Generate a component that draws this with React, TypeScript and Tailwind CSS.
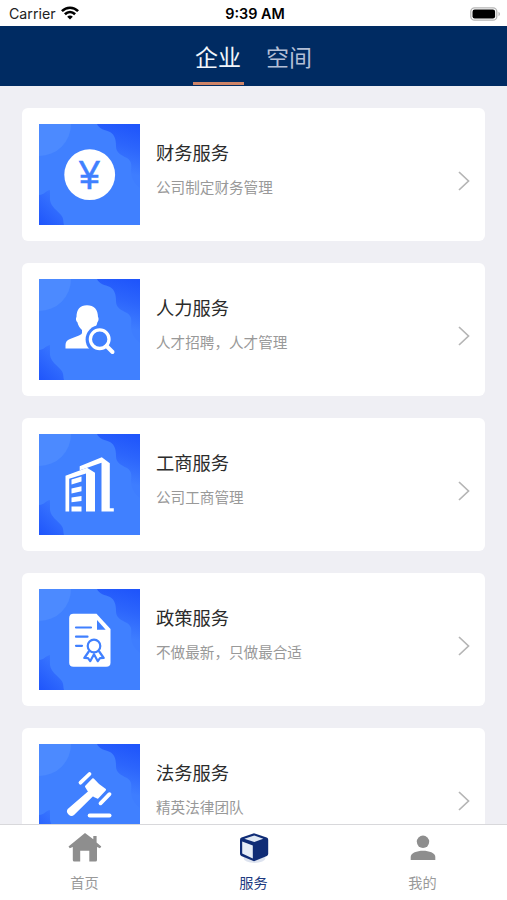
import type { ReactNode } from 'react';
import { useState } from 'react';
import clsx from 'clsx';

interface Service {
  id: string;
  title: string;
  desc: string;
  icon: ReactNode;
}

const YenIcon = () => (
  <g>
    <circle cx="50.7" cy="50.7" r="25.4" fill="#fff" />
    <text
      x="40"
      y="65.3"
      fontSize="40.5"
      textLength="20.8"
      lengthAdjust="spacingAndGlyphs"
      fill="#4080ff"
      stroke="#4080ff"
      strokeWidth="0.5"
      className="font-['Liberation_Sans',sans-serif]"
    >
      ¥
    </text>
  </g>
);

const PersonSearchIcon = () => (
  <g>
    <path
      d="M37.5 38C37.5 30.5 41 26.2 48 26.2S59 30.5 59 38c1 1 .6 4.5-.6 5.2C57.6 47 56.3 49 54.5 51v4.5l8 14H26.5V66c0-3 1.500-4.800 4.500-6l9-3.600c2-.9 3-1.600 3-3V51c-2-2-4-4.500-4.600-7.800-1.500-.9-1.900-4.200-.9-5.200Z"
      fill="#fff"
    />
    <circle cx="60.8" cy="60.5" r="14.2" fill="#4080ff" />
    <circle cx="60.7" cy="60.2" r="9.3" fill="none" stroke="#fff" strokeWidth="3.3" />
    <path d="m67.5 67 6 6" stroke="#fff" strokeWidth="4" strokeLinecap="round" />
  </g>
);

const BuildingIcon = () => (
  <g fill="#fff">
    <path d="M26.5 41.8 48 33.8l8 5V77.5h-9V39.5L30.2 44.8V77.5h-3.7Z" />
    <path d="M40.7 32.2 62.8 23.2l8 6v45h4v3.3H62.5V28.8L44 35.2l-3.3 1Z" />
    <path d="M32.5 45.5 42.5 42.5v5l-10 3ZM32.5 54.5l10-2.3v5l-10 2.3ZM32.5 63.5l10-1.5v5l-10 1.3ZM32.5 72.5h10v5h-10Z" />
  </g>
);

const CertificateIcon = () => (
  <g>
    <path
      d="M34.5 24.7H57.5L71.5 40V73.5q0 4.3-4.3 4.3H34.5q-4.3 0-4.3-4.3V29q0-4.3 4.3-4.3Z"
      fill="#fff"
    />
    <path d="M58 31v9.700h8.700Z" fill="#4080ff" />
    <g fill="none" stroke="#4080ff" strokeWidth="2.2" strokeLinecap="round" strokeLinejoin="round">
      <path d="M37 38.5h15M37 47.700h11.500M37 56.800h6" />
      <circle cx="55" cy="57" r="6.3" />
      <path d="m49.8 62.500-4.500 6.500 3.700.2 2.200 3 3.800-7 3.800 7 2.200-3 3.700-.2-4.500-6.500" />
    </g>
  </g>
);

const GavelIcon = () => (
  <g fill="#fff" stroke="#fff" strokeLinecap="round" strokeLinejoin="round">
    <path d="M41.5 38.7 50.5 30M61.5 59.3 70.5 50.2" strokeWidth="3.8" />
    <path d="m47 42.500 7-7.300q5 6.300 12 10.500l-7.500 8q-3.500-1.500-6-4-3.500-3-5.500-7.200Z" strokeWidth="2" />
    <path d="m50 47.500 4 3.700-19.500 19.300c-2.600 2.200-7.600-2-5-5.300Z" strokeWidth="1.5" />
    <path d="M50.7 71.400h19.800" strokeWidth="4" />
  </g>
);

const services: Service[] = [
  { id: 'finance', title: '财务服务', desc: '公司制定财务管理', icon: <YenIcon /> },
  { id: 'hr', title: '人力服务', desc: '人才招聘，人才管理', icon: <PersonSearchIcon /> },
  { id: 'business', title: '工商服务', desc: '公司工商管理', icon: <BuildingIcon /> },
  { id: 'policy', title: '政策服务', desc: '不做最新，只做最合适', icon: <CertificateIcon /> },
  { id: 'legal', title: '法务服务', desc: '精英法律团队', icon: <GavelIcon /> },
];

function StatusBar() {
  return (
    <div className="grid h-[26px] shrink-0 grid-cols-3 items-center bg-white pl-[9px] pr-[6px] pt-px font-[Inter,sans-serif] text-black">
      <div className="flex items-center gap-[5px]">
        <span className="pt-px text-[14.2px] leading-none text-[#222]">Carrier</span>
        <svg className="h-[14px] w-[18px]" viewBox="0 0 18 14" fill="none" stroke="#000" strokeWidth="2.6">
          <path d="M.9 5.200c4.600-4.600 11.600-4.600 16.200 0M3.900 8.300c3-2.900 7.200-2.900 10.200 0" />
          <path d="M6.2 10.700c1.600-1.500 4-1.500 5.600 0L9 13.600Z" fill="#000" stroke="none" />
        </svg>
      </div>
      <span className="whitespace-nowrap pt-px text-center text-[14.4px] font-semibold leading-none">9:39 AM</span>
      <svg className="h-[14px] w-[31px] justify-self-end" viewBox="0 0 31 14">
        <rect x=".8" y=".8" width="26" height="12.4" rx="3.8" fill="#fff" stroke="#b5b5b5" strokeWidth="1.3" />
        <rect x="2.5" y="2.5" width="22.6" height="9" rx="2.2" fill="#000" />
        <path d="M28.5 4.800c2 .8 2 3.600 0 4.400Z" fill="#b5b5b5" />
      </svg>
    </div>
  );
}

function ServiceThumb({ id, children }: { id: string; children: ReactNode }) {
  return (
    <svg className="size-[101px] shrink-0" viewBox="0 0 101 101">
      <defs>
        <linearGradient id={`top-${id}`} x1="0.8" y1="0" x2="0.6" y2="1">
          <stop offset="0" stopColor="#1f55fb" />
          <stop offset="0.35" stopColor="#2c65fc" />
          <stop offset="0.75" stopColor="#3e7dff" />
        </linearGradient>
        <linearGradient id={`low-${id}`} x1="0" y1="1" x2="0.6" y2="0.1">
          <stop offset="0" stopColor="#1f55fb" />
          <stop offset="1" stopColor="#3976ff" />
        </linearGradient>
      </defs>
      <rect width="101" height="101" fill="#4080ff" />
      <circle cx="0" cy="0" r="32" fill="#4c8aff" />
      <path
        d="M58 0c2 5 8 6 13 8 5 3 6 8 6 14 0 7 5 9 11 12 6 4 4 9 4 14s3 12 9 16V0Z"
        fill={`url(#top-${id})`}
      />
      <path d="M0 71c5 0 6-4 11-5v10c1 7 8 11 11 15 3 3 2 7 3 10H0Z" fill={`url(#low-${id})`} />
      {children}
    </svg>
  );
}

function ServiceCard({ service }: { service: Service }) {
  return (
    <div className="flex h-[133px] shrink-0 items-center rounded-md bg-white pl-[17px] pr-[14px]">
      <ServiceThumb id={service.id}>{service.icon}</ServiceThumb>
      <div className="ml-4 flex h-[101px] flex-1 flex-col pt-4">
        <h3 className="text-[18.3px] leading-6 text-[#2b2b2b]">{service.title}</h3>
        <p className="mt-[13px] text-[14.6px] leading-5 text-[#999]">{service.desc}</p>
      </div>
      <svg className="mt-3 h-5 w-[14px]" viewBox="0 0 14 20" fill="none" stroke="#b5b5b5" strokeWidth="1.7">
        <path d="m2 1 9.500 9L2 19" />
      </svg>
    </div>
  );
}

const HomeIcon = () => (
  <svg className="h-8 w-[34px]" viewBox="0 0 34 32" fill="#8e8e8e">
    <path d="M17 1 .5 14.500l1.300 1.800 3-1.200V28q0 1.500 1.500 1.500h5.900V18.800h9.100v10.700h6.200q1.500 0 1.500-1.500V15.100l3 1.200 1.300-1.800-4.700-4V4h-3.300v3.200Z" />
  </svg>
);

const BoxIcon = () => (
  <svg className="h-8 w-[34px]" viewBox="0 0 34 32">
    <ellipse cx="17.5" cy="26" rx="11" ry="5" fill="#dde3ef" />
    <path
      d="M17 1.200 29.700 5.500q1.500.6 1.500 2.200v14q0 1.500-1.300 2.200L17 29.300 4.300 23.900Q3 23.200 3 21.700v-14Q3 6.100 4.500 5.500Z"
      fill="#0f2c76"
    />
    <path d="m17.3 3.600 9 3.200-9 3.200-10-3.200Z" fill="#dfe8f4" />
    <path d="m5.2 9.500 10.600 3.900v13L5.200 21.600Z" fill="#e6edf7" />
  </svg>
);

const UserIcon = () => (
  <svg className="h-8 w-[34px]" viewBox="0 0 34 32" fill="#8e8e8e">
    <circle cx="17" cy="9.8" r="6.2" />
    <path d="M4.7 28v-3C4.7 20.8 11 18.7 17 18.7S29.300 20.800 29.300 25v3Z" />
  </svg>
);

const navItems = [
  { key: 'home', label: '首页', icon: <HomeIcon /> },
  { key: 'service', label: '服务', icon: <BoxIcon /> },
  { key: 'mine', label: '我的', icon: <UserIcon /> },
];

export default function App() {
  const [tab, setTab] = useState('企业');
  const [nav, setNav] = useState('service');

  return (
    <div className="flex h-[900px] w-[507px] flex-col overflow-hidden bg-[#efeff4] font-['Noto_Sans_CJK_SC',sans-serif]">
      <StatusBar />

      <header className="flex h-[60px] shrink-0 justify-center gap-5 bg-[#002b62]">
        {['企业', '空间'].map((name) => (
          <button
            key={name}
            onClick={() => setTab(name)}
            className={clsx(
              'flex w-[51px] flex-col items-center pt-[14px] text-[23px] leading-[33px]',
              tab === name ? 'text-[#f2f6fc]' : 'text-[#b3bfd6]',
            )}
          >
            <span>{name}</span>
            {tab === name && <span className="mt-[9px] h-[3px] w-full shrink-0 bg-[#cf8467]" />}
          </button>
        ))}
      </header>

      <main className="flex min-h-0 flex-1 flex-col gap-[22px] overflow-hidden px-[22px] pt-[22px]">
        {services.map((service) => (
          <ServiceCard key={service.id} service={service} />
        ))}
      </main>

      <nav className="grid h-[76px] shrink-0 grid-cols-3 border-t border-[#d8d8db] bg-white">
        {navItems.map((item) => (
          <button
            key={item.key}
            onClick={() => setNav(item.key)}
            className="flex flex-col items-center pt-[7px]"
          >
            {item.icon}
            <span
              className={clsx(
                'mt-2 text-[14.2px] leading-5',
                nav === item.key ? 'text-[#1d3a80]' : 'text-[#999]',
              )}
            >
              {item.label}
            </span>
          </button>
        ))}
      </nav>
    </div>
  );
}
